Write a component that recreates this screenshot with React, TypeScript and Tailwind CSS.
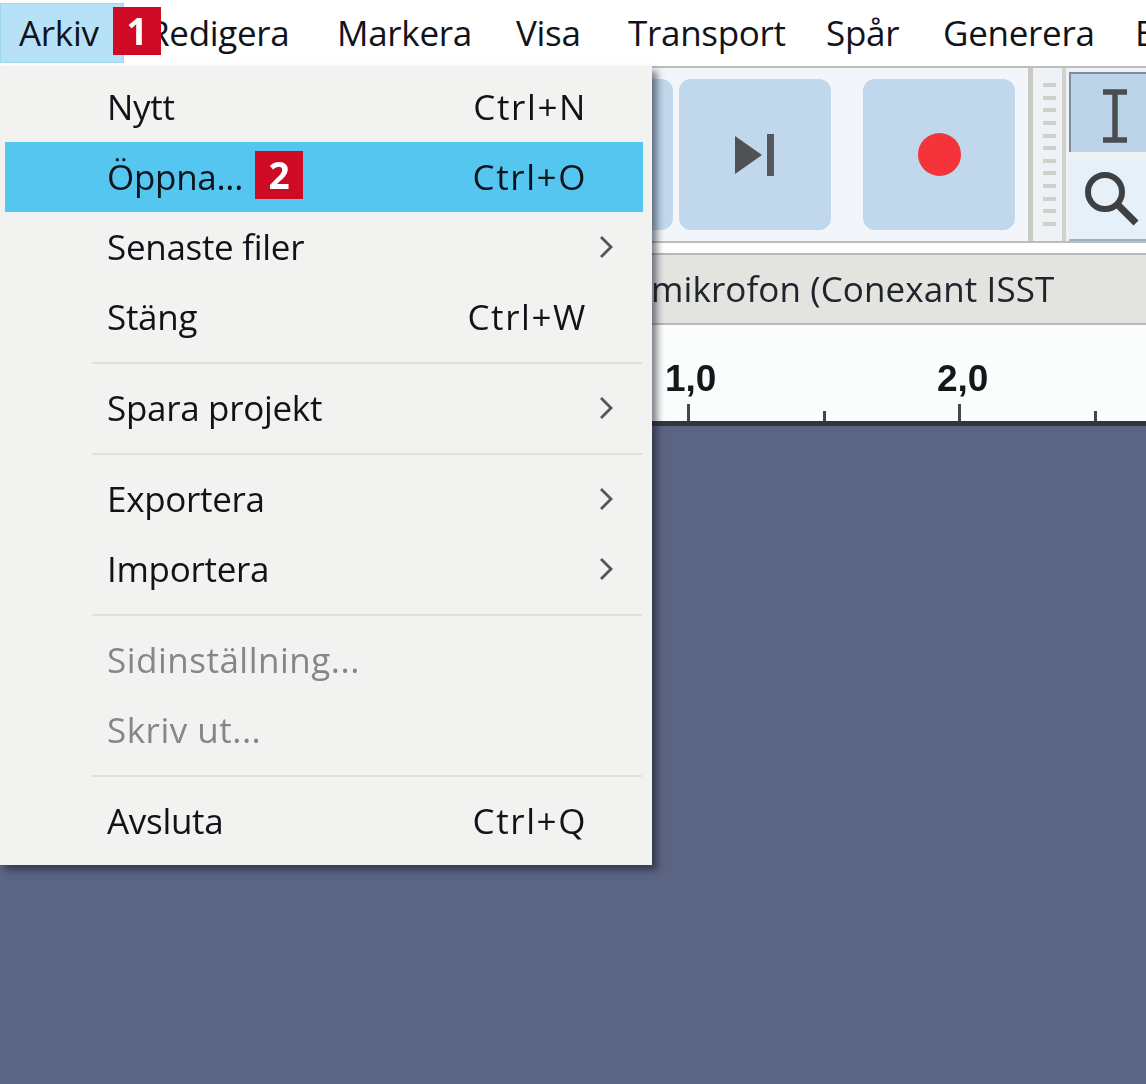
import React from 'react';

// fixed widths keep the labels on the reference's x positions
const menuBarItems = [
  { label: 'Redigera', width: 'w-[189px]' },
  { label: 'Markera', width: 'w-[179px]' },
  { label: 'Visa', width: 'w-[112px]' },
  { label: 'Transport', width: 'w-[198px]' },
  { label: 'Spår', width: 'w-[117px]' },
  { label: 'Generera', width: 'w-[192px]' },
  { label: 'E', width: 'w-[20px]' },
];

type MenuEntry = { label: string; shortcut?: string; submenu?: boolean; disabled?: boolean; active?: boolean };

const menuGroups: MenuEntry[][] = [
  [
    { label: 'Nytt', shortcut: 'Ctrl+N' },
    { label: 'Öppna...', shortcut: 'Ctrl+O', active: true },
    { label: 'Senaste filer', submenu: true },
    { label: 'Stäng', shortcut: 'Ctrl+W' },
  ],
  [{ label: 'Spara projekt', submenu: true }],
  [
    { label: 'Exportera', submenu: true },
    { label: 'Importera', submenu: true },
  ],
  [
    { label: 'Sidinställning...', disabled: true },
    { label: 'Skriv ut...', disabled: true },
  ],
  [{ label: 'Avsluta', shortcut: 'Ctrl+Q' }],
];

const rulerTicks = [true, false, true, false];

const Chevron: React.FC = () => (
  <svg width="14" height="24" viewBox="0 0 14 24" fill="none" className="absolute left-[594px] top-[23px]">
    <path d="M2 2 L12 12 L2 22" stroke="#555555" strokeWidth="2.8" />
  </svg>
);

const MenuRow: React.FC<{ entry: MenuEntry }> = ({ entry }) => (
  <div
    className={`relative ml-[5px] mr-[9px] flex h-[70px] items-center justify-between pl-[102px] pr-[56px] ${
      entry.active ? 'bg-[#55c6ef]' : ''
    } ${entry.disabled ? 'text-[#868686] tracking-[0.5px]' : 'text-[#10131a]'}`}
  >
    <span>{entry.label}</span>
    {entry.shortcut && <span className="tracking-[1.6px]">{entry.shortcut}</span>}
    {entry.submenu && <Chevron />}
  </div>
);

const FileMenu: React.FC = () => (
  <div className="absolute left-0 top-[66px] w-[652px] bg-[#f2f3f1] pb-[9px] pt-[6px] shadow-[5px_5px_7px_rgba(20,24,40,0.55)]">
    {menuGroups.map((group, i) => (
      <div key={i}>
        {i > 0 && (
          <div className="flex h-[21px] items-center pl-[92px] pr-[10px]">
            <div className="h-[2px] w-full bg-[#dfdfdd]" />
          </div>
        )}
        {group.map((entry) => (
          <MenuRow entry={entry} key={entry.label} />
        ))}
      </div>
    ))}
  </div>
);

const Badge: React.FC<{ children: React.ReactNode; className: string }> = ({ children, className }) => (
  <div
    className={`absolute flex h-[48px] w-[48px] items-center justify-center bg-[#cf0a25] font-['Open_Sans',sans-serif] text-[37px] font-bold text-white ${className}`}
  >
    {children}
  </div>
);

const App: React.FC = () => {
  return (
    <div className="relative h-[1084px] w-[1146px] overflow-hidden bg-[linear-gradient(#ffffff_0,#ffffff_420px,#5c6484_420px)]">
      <div className="h-full w-full font-['Open_Sans',sans-serif] text-[35px] tracking-[-0.3px] text-[#10131a] blur-[0.7px]">
        {/* menu bar */}
        <div className="flex h-[66px] items-center overflow-hidden whitespace-nowrap bg-white">
          <div className="flex h-[60px] w-[124px] shrink-0 items-center border border-[#9fd6f0] bg-[#b6e1f6] pl-[18px]">Arkiv</div>
          <div className="ml-[24px] flex">
            {menuBarItems.map((item) => (
              <span className={`shrink-0 ${item.width}`} key={item.label}>
                {item.label}
              </span>
            ))}
          </div>
        </div>

        {/* transport toolbar */}
        <div className="flex h-[177px] border-y-2 border-[#bdbdb9] bg-[#eff2f4]">
          <div className="flex w-[1033px] shrink-0 items-center justify-end border-r-[5px] border-[#c9c9c6] bg-[#f2f6fa] pr-[13px]">
            <div className="h-[151px] w-[152px] rounded-[12px] bg-[#c1d7eb]" />
            <div className="ml-[6px] flex h-[151px] w-[152px] items-center justify-center rounded-[12px] bg-[#c1d7eb]">
              <svg width="40" height="42" viewBox="0 0 40 42">
                <path d="M0 2 L27 21 L0 40 Z" fill="#4f5153" />
                <rect x="32" y="0" width="7" height="42" fill="#55585b" />
              </svg>
            </div>
            <div className="ml-[32px] flex h-[151px] w-[152px] items-center justify-center rounded-[12px] bg-[#c1d7eb]">
              <div className="h-[43px] w-[43px] rounded-full bg-[#f4333a]" />
            </div>
          </div>
          <div className="ml-[10px] flex w-[13px] shrink-0 flex-col justify-center gap-[8.6px]">
            {Array.from({ length: 12 }).map((_, i) => (
              <div className="h-[4px] bg-[#cfcfcc]" key={i} />
            ))}
          </div>
          <div className="ml-[6px] w-[4px] shrink-0 bg-[#d0d0cd]" />
          <div className="ml-[3px] flex flex-1 flex-col gap-[8px] pt-[4px]">
            <div className="flex h-[80px] justify-center border-l-2 border-t-2 border-[#7d8ea3] bg-[#bcd3e8] pt-[14px]">
              <svg width="30" height="56" viewBox="0 0 30 56" className="ml-[12px]" fill="none" stroke="#4b4e51" strokeWidth="5.5">
                <path d="M3 4 H27 M3 52 H27 M15 4 V52" />
              </svg>
            </div>
            <div className="flex h-[81px] items-center border-b-2 border-[#9fb0c4] bg-[#e6f0f9] pl-[15px]">
              <svg width="58" height="58" viewBox="0 0 58 58" fill="none" stroke="#3e4144" strokeWidth="6">
                <circle cx="21" cy="21" r="17" />
                <path d="M34 34 L52 52" strokeWidth="7" />
              </svg>
            </div>
          </div>
        </div>

        {/* device row */}
        <div className="h-[10px] bg-white" />
        <div className="flex h-[72px] items-center border-y-2 border-[#b9b9b5] bg-[#e3e3e0] pl-[651px] tracking-[0.1px] text-[#20242c]">
          <span className="whitespace-nowrap">mikrofon (Conexant ISST</span>
        </div>

        {/* ruler */}
        <div className="flex h-[101px] flex-col justify-end border-b-[5px] border-[#33353a] bg-[#fbfcfc]">
          <div className="flex pb-[4px] pl-[665px] font-['Liberation_Sans',sans-serif] text-[37px] font-bold leading-[42px] tracking-normal text-[#14171b]">
            <span className="w-[272px]">1,0</span>
            <span>2,0</span>
          </div>
          <div className="flex h-[17px] items-end pl-[687px]">
            {rulerTicks.map((major, i) => (
              <div className="w-[135.7px] shrink-0" key={i}>
                <div className={`w-[3px] bg-[#44474c] ${major ? 'h-[17px]' : 'h-[10px]'}`} />
              </div>
            ))}
          </div>
        </div>

        <FileMenu />
      </div>

      <Badge className="left-[113px] top-[7px]">1</Badge>
      <Badge className="left-[255px] top-[151px]">2</Badge>
    </div>
  );
};

export default App;
